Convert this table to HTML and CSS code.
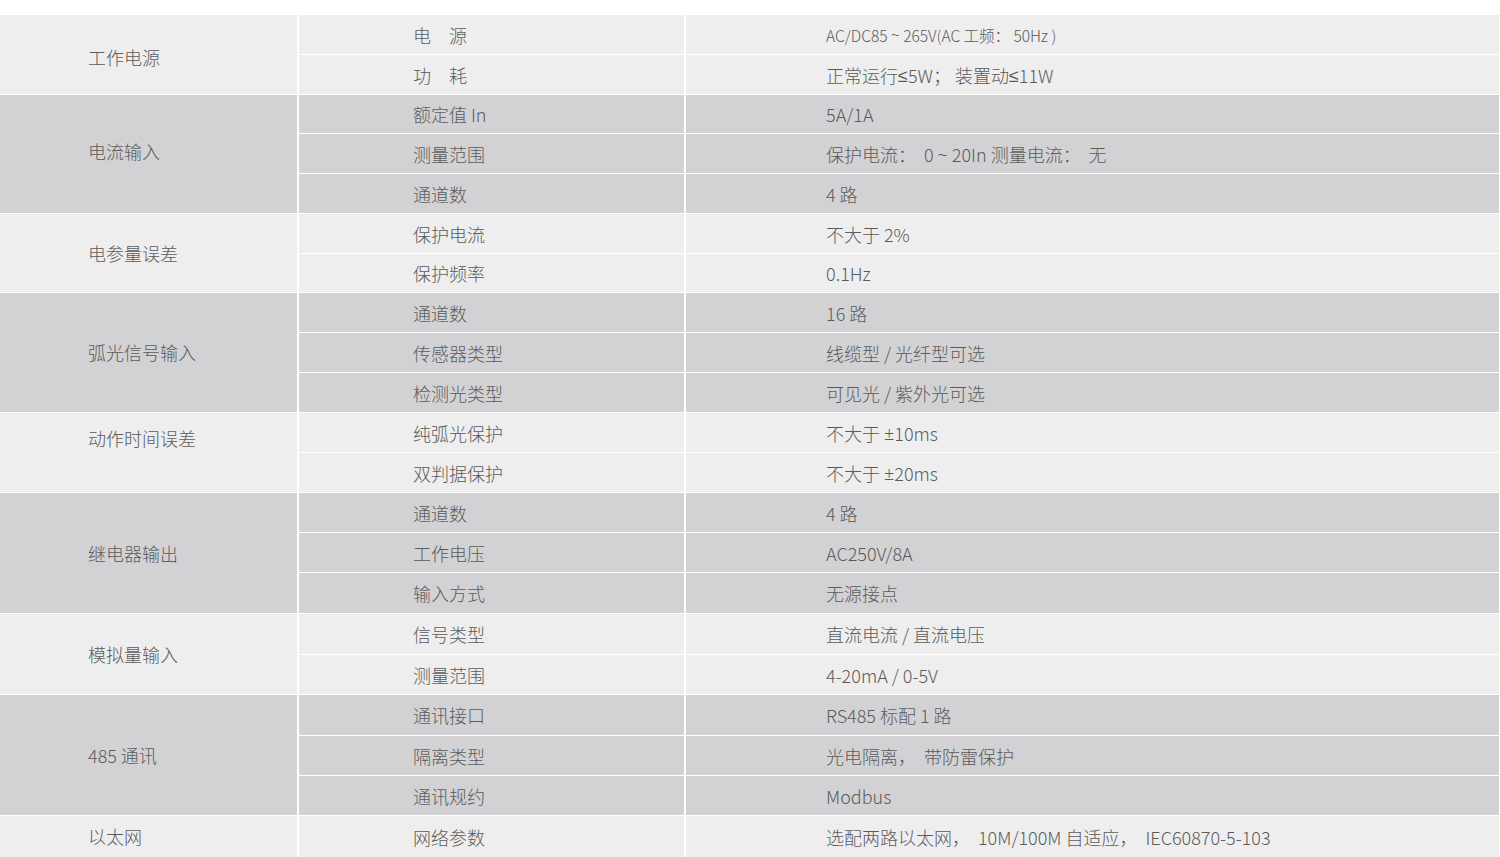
FILE: index.html
```html
<!DOCTYPE html>
<html lang="zh-CN">
<head>
<meta charset="utf-8">
<title>技术参数</title>
<link rel="stylesheet" href="styles.css">
</head>
<body>
<div class="spec">
  <div class="group light span2 nudge-down">工作电源</div>
  <div class="key light">电　源</div><div class="val light small">AC/DC85 <span class="sym">~</span> 265V(AC 工频： 50Hz )</div>
  <div class="key light">功　耗</div><div class="val light">正常运行<span class="sym">≤</span>5W； 装置动<span class="sym">≤</span>11W</div>

  <div class="group dark span3 nudge-up">电流输入</div>
  <div class="key dark">额定值 In</div><div class="val dark">5A/1A</div>
  <div class="key dark">测量范围</div><div class="val dark">保护电流：  0 <span class="sym">~</span> 20In 测量电流：  无</div>
  <div class="key dark">通道数</div><div class="val dark">4 路</div>

  <div class="group light span2">电参量误差</div>
  <div class="key light">保护电流</div><div class="val light">不大于 2%</div>
  <div class="key light">保护频率</div><div class="val light">0.1Hz</div>

  <div class="group dark span3">弧光信号输入</div>
  <div class="key dark">通道数</div><div class="val dark">16 路</div>
  <div class="key dark">传感器类型</div><div class="val dark">线缆型 / 光纤型可选</div>
  <div class="key dark">检测光类型</div><div class="val dark">可见光 / 紫外光可选</div>

  <div class="group light span2 top">动作时间误差</div>
  <div class="key light">纯弧光保护</div><div class="val light">不大于 <span class="sym">±</span>10ms</div>
  <div class="key light">双判据保护</div><div class="val light">不大于 <span class="sym">±</span>20ms</div>

  <div class="group dark span3">继电器输出</div>
  <div class="key dark">通道数</div><div class="val dark">4 路</div>
  <div class="key dark">工作电压</div><div class="val dark">AC250V/8A</div>
  <div class="key dark">输入方式</div><div class="val dark">无源接点</div>

  <div class="group light span2">模拟量输入</div>
  <div class="key light">信号类型</div><div class="val light">直流电流 / 直流电压</div>
  <div class="key light">测量范围</div><div class="val light">4-20mA / 0-5V</div>

  <div class="group dark span3">485 通讯</div>
  <div class="key dark">通讯接口</div><div class="val dark">RS485 标配 1 路</div>
  <div class="key dark">隔离类型</div><div class="val dark">光电隔离，  带防雷保护</div>
  <div class="key dark">通讯规约</div><div class="val dark">Modbus</div>

  <div class="group light">以太网</div>
  <div class="key light">网络参数</div><div class="val light">选配两路以太网，  10M/100M 自适应，  IEC60870-5-103</div>
</div>
</body>
</html>
```

FILE: styles.css
```css
html, body {
  margin: 0;
  padding: 0;
  background: #ffffff;
}

body {
  padding-top: 15px;
  font-family: "Noto Sans CJK SC", "Noto Sans", sans-serif;
  font-weight: 300;
  font-size: 18px;
  color: #5b5b5b;
}

.spec {
  width: 1499px;
  display: grid;
  grid-template-columns: 297px 385px 813px;
  grid-template-rows: 39px 39px 38px 39px 39px 39px 38px 39px 39px 39px 39px 39px 39px 39px 40px 40px 39px 40px 39px 39px 41px;
  column-gap: 2px;
  row-gap: 1px;
  background: #ffffff;
}

.group,
.key,
.val {
  display: flex;
  align-items: center;
  white-space: pre;
  line-height: 26px;
  box-sizing: border-box;
}

.group {
  grid-column: 1;
  padding-left: 88px;
  padding-bottom: 1px;
}

.key {
  grid-column: 2;
  padding-left: 114px;
}

.val {
  grid-column: 3;
  padding-left: 140px;
}

.span2 { grid-row: span 2; }
.span3 { grid-row: span 3; }

.light { background: #eeeeee; }
.dark { background: #d2d2d4; }

.small { font-size: 15.5px; }

.sym {
  font-family: "Noto Sans", "DejaVu Sans", sans-serif;
  font-weight: 300;
}

.top {
  align-items: flex-start;
  padding-top: 12px;
}

.nudge-down { padding-top: 5px; }
.nudge-up { padding-bottom: 6px; }
```
